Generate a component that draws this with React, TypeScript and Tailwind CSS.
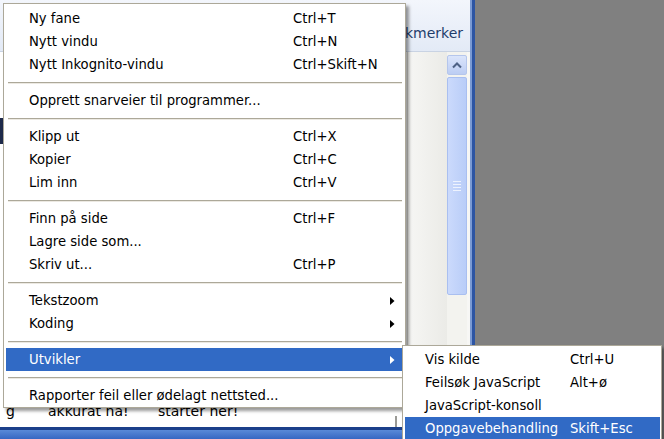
import React from "react";

type Item =
  | { kind: "row"; label: string; sc?: string; sub?: boolean; active?: boolean }
  | { kind: "sep" };

const mainItems: Item[] = [
  { kind: "row", label: "Ny fane", sc: "Ctrl+T" },
  { kind: "row", label: "Nytt vindu", sc: "Ctrl+N" },
  { kind: "row", label: "Nytt Inkognito-vindu", sc: "Ctrl+Skift+N" },
  { kind: "sep" },
  { kind: "row", label: "Opprett snarveier til programmer..." },
  { kind: "sep" },
  { kind: "row", label: "Klipp ut", sc: "Ctrl+X" },
  { kind: "row", label: "Kopier", sc: "Ctrl+C" },
  { kind: "row", label: "Lim inn", sc: "Ctrl+V" },
  { kind: "sep" },
  { kind: "row", label: "Finn på side", sc: "Ctrl+F" },
  { kind: "row", label: "Lagre side som..." },
  { kind: "row", label: "Skriv ut...", sc: "Ctrl+P" },
  { kind: "sep" },
  { kind: "row", label: "Tekstzoom", sub: true },
  { kind: "row", label: "Koding", sub: true },
  { kind: "sep" },
  { kind: "row", label: "Utvikler", sub: true, active: true },
  { kind: "sep" },
  { kind: "row", label: "Rapporter feil eller ødelagt nettsted..." },
];

const subItems = [
  { label: "Vis kilde", sc: "Ctrl+U" },
  { label: "Feilsøk JavaScript", sc: "Alt+ø" },
  { label: "JavaScript-konsoll", sc: "" },
  { label: "Oppgavebehandling", sc: "Skift+Esc", active: true },
];

function Arrow({ white }: { white?: boolean }) {
  return (
    <svg width="5" height="8" viewBox="0 0 5 8" className="block">
      <path d="M0 0 L4.5 4 L0 8 Z" fill={white ? "#ffffff" : "#000000"} />
    </svg>
  );
}

function MainMenu() {
  return (
    <div className="absolute left-[3px] top-[3px] w-[403px] bg-white border border-[#aca899] pt-[3px] shadow-[3px_3px_3px_rgba(0,0,0,0.4)]">
      {mainItems.map((it, i) =>
        it.kind === "sep" ? (
          <div key={i} className="h-[13px] flex flex-col justify-center ml-[4px] mr-[3px]">
            <div className="h-[1px] bg-[#aca899]" />
            <div className="h-[1px] bg-[#ece9e2]" />
          </div>
        ) : (
          <div
            key={i}
            className={
              "h-[23px] ml-[2px] mr-[3px] flex items-center " +
              (it.active ? "bg-[#316ac5] text-white" : "text-black")
            }
          >
            <div className="w-[287px] pl-[23px] whitespace-nowrap">{it.label}</div>
            <div className="whitespace-nowrap">{it.sc}</div>
            {it.sub && (
              <div className="ml-auto mr-[7px]">
                <Arrow white={it.active} />
              </div>
            )}
          </div>
        )
      )}
    </div>
  );
}

function SubMenu() {
  return (
    <div className="absolute left-[402px] top-[345px] w-[260px] h-[100px] bg-white border border-[#aca899] pt-[2px] shadow-[3px_3px_3px_rgba(0,0,0,0.4)]">
      {subItems.map((it, i) => (
        <div
          key={i}
          className={
            "h-[23px] ml-[2px] mr-[1px] flex items-center " +
            (it.active ? "bg-[#316ac5] text-white" : "text-black")
          }
        >
          <div className="w-[165px] pl-[20px] whitespace-nowrap">{it.label}</div>
          <div className="whitespace-nowrap">{it.sc}</div>
        </div>
      ))}
    </div>
  );
}

export default function App() {
  return (
    <div
      className="relative w-[664px] h-[439px] overflow-hidden bg-[#808080] text-[13.2px] leading-none"
      style={{ fontFamily: '"DejaVu Sans", Verdana, sans-serif' }}
    >
      <div className="flex h-full">
        {/* Browser window */}
        <div className="w-[470px] h-full flex flex-col bg-white">
          {/* Toolbar / bookmarks header */}
          <div className="h-[52px] shrink-0 flex items-end bg-gradient-to-b from-[#f3f6fc] to-[#e3eaf6] border-b border-[#c9d3e3]">
            <div className="flex-1" />
            <div className="w-[65px] pb-[11px] text-[14px] text-[#1f3d6b] whitespace-nowrap overflow-hidden">
              <span>kmerker</span>
            </div>
          </div>
          {/* Content + scrollbar */}
          <div className="h-[353px] shrink-0 flex">
            <div className="flex-1 flex">
              <div className="w-[3px] flex flex-col bg-white">
                <div className="h-[66px]" />
                <div className="h-[26px] bg-[#1e2a4a]" />
              </div>
              <div className="flex-1 bg-white" />
              <div className="w-[40px] bg-gradient-to-r from-[#f6f6f4] to-[#ebebe7] border-l border-[#dcdcd6]" />
            </div>
            <div className="w-[20px] flex flex-col pt-[3px] bg-[#f3f3ef]">
              <div className="h-[20px] rounded-[2px] bg-gradient-to-b from-[#dbe5fb] to-[#bccdf3] border border-[#b5c6ec] flex items-center justify-center">
                <svg width="10" height="7" viewBox="0 0 10 7">
                  <path d="M1 5.5 L5 1.5 L9 5.5" stroke="#4d6185" strokeWidth="2" fill="none" />
                </svg>
              </div>
              <div className="h-[2px]" />
              <div className="h-[218px] rounded-[2px] bg-gradient-to-r from-[#cbdafc] to-[#b9cdf8] border border-[#a9bff0] flex items-center justify-center">
                <div className="flex flex-col gap-[2px] w-[8px]">
                  <div className="h-[1px] bg-[#eef3fe]" />
                  <div className="h-[1px] bg-[#eef3fe]" />
                  <div className="h-[1px] bg-[#eef3fe]" />
                  <div className="h-[1px] bg-[#eef3fe]" />
                </div>
              </div>
            </div>
            <div className="w-[3px] bg-[#f7f7f5]" />
          </div>
          {/* Bottom text row */}
          <div className="h-[22px] shrink-0 relative bg-white text-[14px] text-black">
            <div className="flex items-start whitespace-nowrap mt-[-1px]">
              <span className="ml-[6px] w-[42px]">g</span>
              <span className="w-[110px]">akkurat nå!</span>
              <span>starter her!</span>
            </div>
            <div className="absolute left-[395px] top-[11px] w-[2px] h-[11px] bg-[#9a9a96]" />
          </div>
          <div className="h-[3px] shrink-0 bg-[#1b3f8a]" />
          <div className="flex-1 bg-gradient-to-b from-[#5a8ad8] to-[#3767c2]" />
        </div>
        {/* Window border */}
        <div className="w-[5px] h-full flex">
          <div className="w-[2px] bg-[#7b9ad3]" />
          <div className="w-[3px] bg-[#2d55a3]" />
        </div>
        <div className="flex-1 bg-[#808080]" />
      </div>
      <MainMenu />
      <SubMenu />
    </div>
  );
}
